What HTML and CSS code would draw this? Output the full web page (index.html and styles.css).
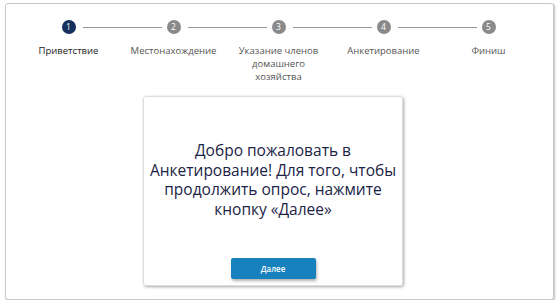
FILE: index.html
```html
<!DOCTYPE html>
<html lang="ru">
<head>
<meta charset="utf-8">
<link rel="stylesheet" href="styles.css">
</head>
<body>
<div class="frame">
  <ol class="stepper">
    <li class="step active"><span class="dot">1</span><span class="label">Приветствие</span></li>
    <li class="step"><span class="dot">2</span><span class="label">Местонахождение</span></li>
    <li class="step"><span class="dot">3</span><span class="label">Указание членов домашнего хозяйства</span></li>
    <li class="step"><span class="dot">4</span><span class="label">Анкетирование</span></li>
    <li class="step last"><span class="dot">5</span><span class="label">Финиш</span></li>
  </ol>
  <div class="card">
    <p class="welcome">Добро пожаловать в Анкетирование! Для того, чтобы продолжить опрос, нажмите кнопку «Далее»</p>
    <button class="next">Далее</button>
  </div>
</div>
</body>
</html>
```
FILE: styles.css
```css
html, body {
  margin: 0;
  padding: 0;
  background: #fff;
  font-family: "Open Sans", "Noto Sans", sans-serif;
}
.frame {
  box-sizing: border-box;
  margin: 3px 6px 0 5px;
  height: 297px;
  border: 1px solid #c9c9c9;
  border-radius: 3px;
  box-shadow: 1px 1px 2px rgba(0,0,0,0.25);
  background: #fff;
}
.stepper {
  list-style: none;
  margin: 0;
  padding: 16px 12px 0 10px;
  display: grid;
  grid-template-columns: repeat(5, 1fr);
}
.step {
  position: relative;
  display: flex;
  flex-direction: column;
  align-items: center;
}
.step::after {
  content: "";
  position: absolute;
  top: 7px;
  left: calc(50% + 14px);
  width: calc(100% - 26px);
  height: 1px;
  background: #9a9a9a;
}
.step.last::after { display: none; }
.dot {
  width: 14px;
  height: 14px;
  border-radius: 50%;
  background: #8a8a8a;
  color: #fff;
  font-size: 8.5px;
  line-height: 14px;
  text-align: center;
}
.active .dot { background: #14315e; }
.label {
  margin-top: 10px;
  font-size: 9.5px;
  line-height: 13px;
  color: #555;
  text-align: center;
  max-width: 98px;
}
.active .label { color: #222; }
.card {
  box-sizing: border-box;
  width: 260px;
  height: 190px;
  margin: 13px 0 0 137px;
  border: 1px solid #ddd;
  border-radius: 3px;
  box-shadow: 1px 1px 3px rgba(0,0,0,0.35);
  display: flex;
  flex-direction: column;
  align-items: center;
  padding-top: 44px;
}
.welcome {
  margin: 0;
  padding: 0;
  font-size: 15.5px;
  line-height: 19.5px;
  color: #1b2446;
  text-align: center;
}
.next {
  margin-top: 39px;
  width: 85px;
  height: 21px;
  border: none;
  border-radius: 2px;
  background: #1681bd;
  color: #fff;
  font-family: "Open Sans", sans-serif;
  font-size: 8px;
  font-weight: 600;
  box-shadow: 1px 2px 3px rgba(0,0,0,0.3);
  padding: 0;
}
```
